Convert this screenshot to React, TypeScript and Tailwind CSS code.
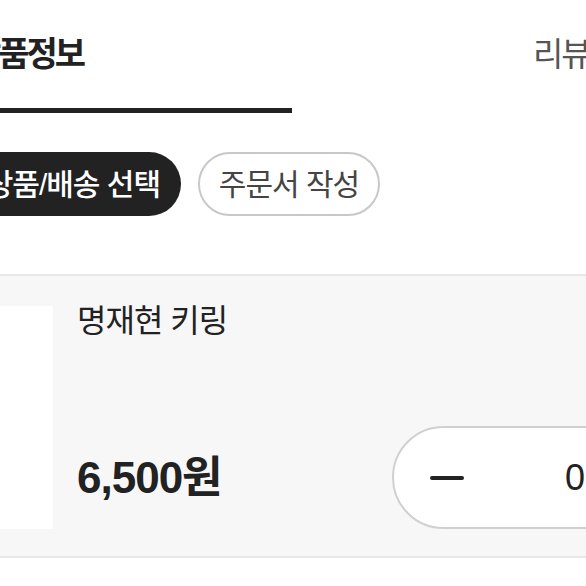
export default function App() {
  return (
    <div
      className="w-[586px] h-[586px] overflow-hidden bg-white text-[#222]"
      style={{ fontFamily: '"Liberation Sans", "Noto Sans CJK KR", sans-serif' }}
    >
      {/* tabs */}
      <div className="flex h-[108px] items-center">
        <div className="w-[292px] shrink-0 flex">
          <span className="ml-[-30px] text-[34px] font-bold tracking-[-3px] leading-none whitespace-nowrap">상품정보</span>
        </div>
        <span className="ml-[241px] text-[33px] text-[#555] tracking-[-2px] leading-none whitespace-nowrap">리뷰</span>
      </div>
      <div className="w-[292px] h-[5px] bg-[#222]" />

      {/* steps */}
      <div className="mt-[39px] flex items-center gap-[17px]">
        <div className="ml-[-80px] w-[261px] h-[64px] shrink-0 rounded-full bg-[#222] flex items-center justify-end pr-[21px]">
          <span className="text-white text-[30px] font-medium tracking-[-1px] whitespace-nowrap">상품/배송 선택</span>
        </div>
        <div className="w-[182px] h-[64px] shrink-0 rounded-full border-2 border-[#c8c8c8] flex items-center justify-center">
          <span className="text-[#444] text-[30px] tracking-[-1px] whitespace-nowrap">주문서 작성</span>
        </div>
      </div>

      {/* product */}
      <div className="mt-[58px] h-[284px] border-y-2 border-[#e8e8e8] bg-[#f7f7f7] flex pt-[30px] pb-[27px]">
        <div className="w-[53px] shrink-0 bg-white" />
        <div className="ml-[24px] flex-1 flex flex-col justify-between min-w-0">
          <div className="text-[32px] tracking-[-1px] leading-none mt-[-1px] whitespace-nowrap">명재현 키링</div>
          <div className="flex items-center">
            <span className="text-[44px] font-bold tracking-[-1px] whitespace-nowrap">6,500원</span>
            <div className="ml-auto mr-[-290px] w-[484px] h-[103px] shrink-0 rounded-full border-2 border-[#d0d0d0] bg-white flex items-center">
              <div className="ml-[36px] w-[34px] h-[4px] rounded-full bg-[#222]" />
              <span className="ml-[101px] text-[36px] leading-none">0</span>
            </div>
          </div>
        </div>
      </div>
    </div>
  );
}
